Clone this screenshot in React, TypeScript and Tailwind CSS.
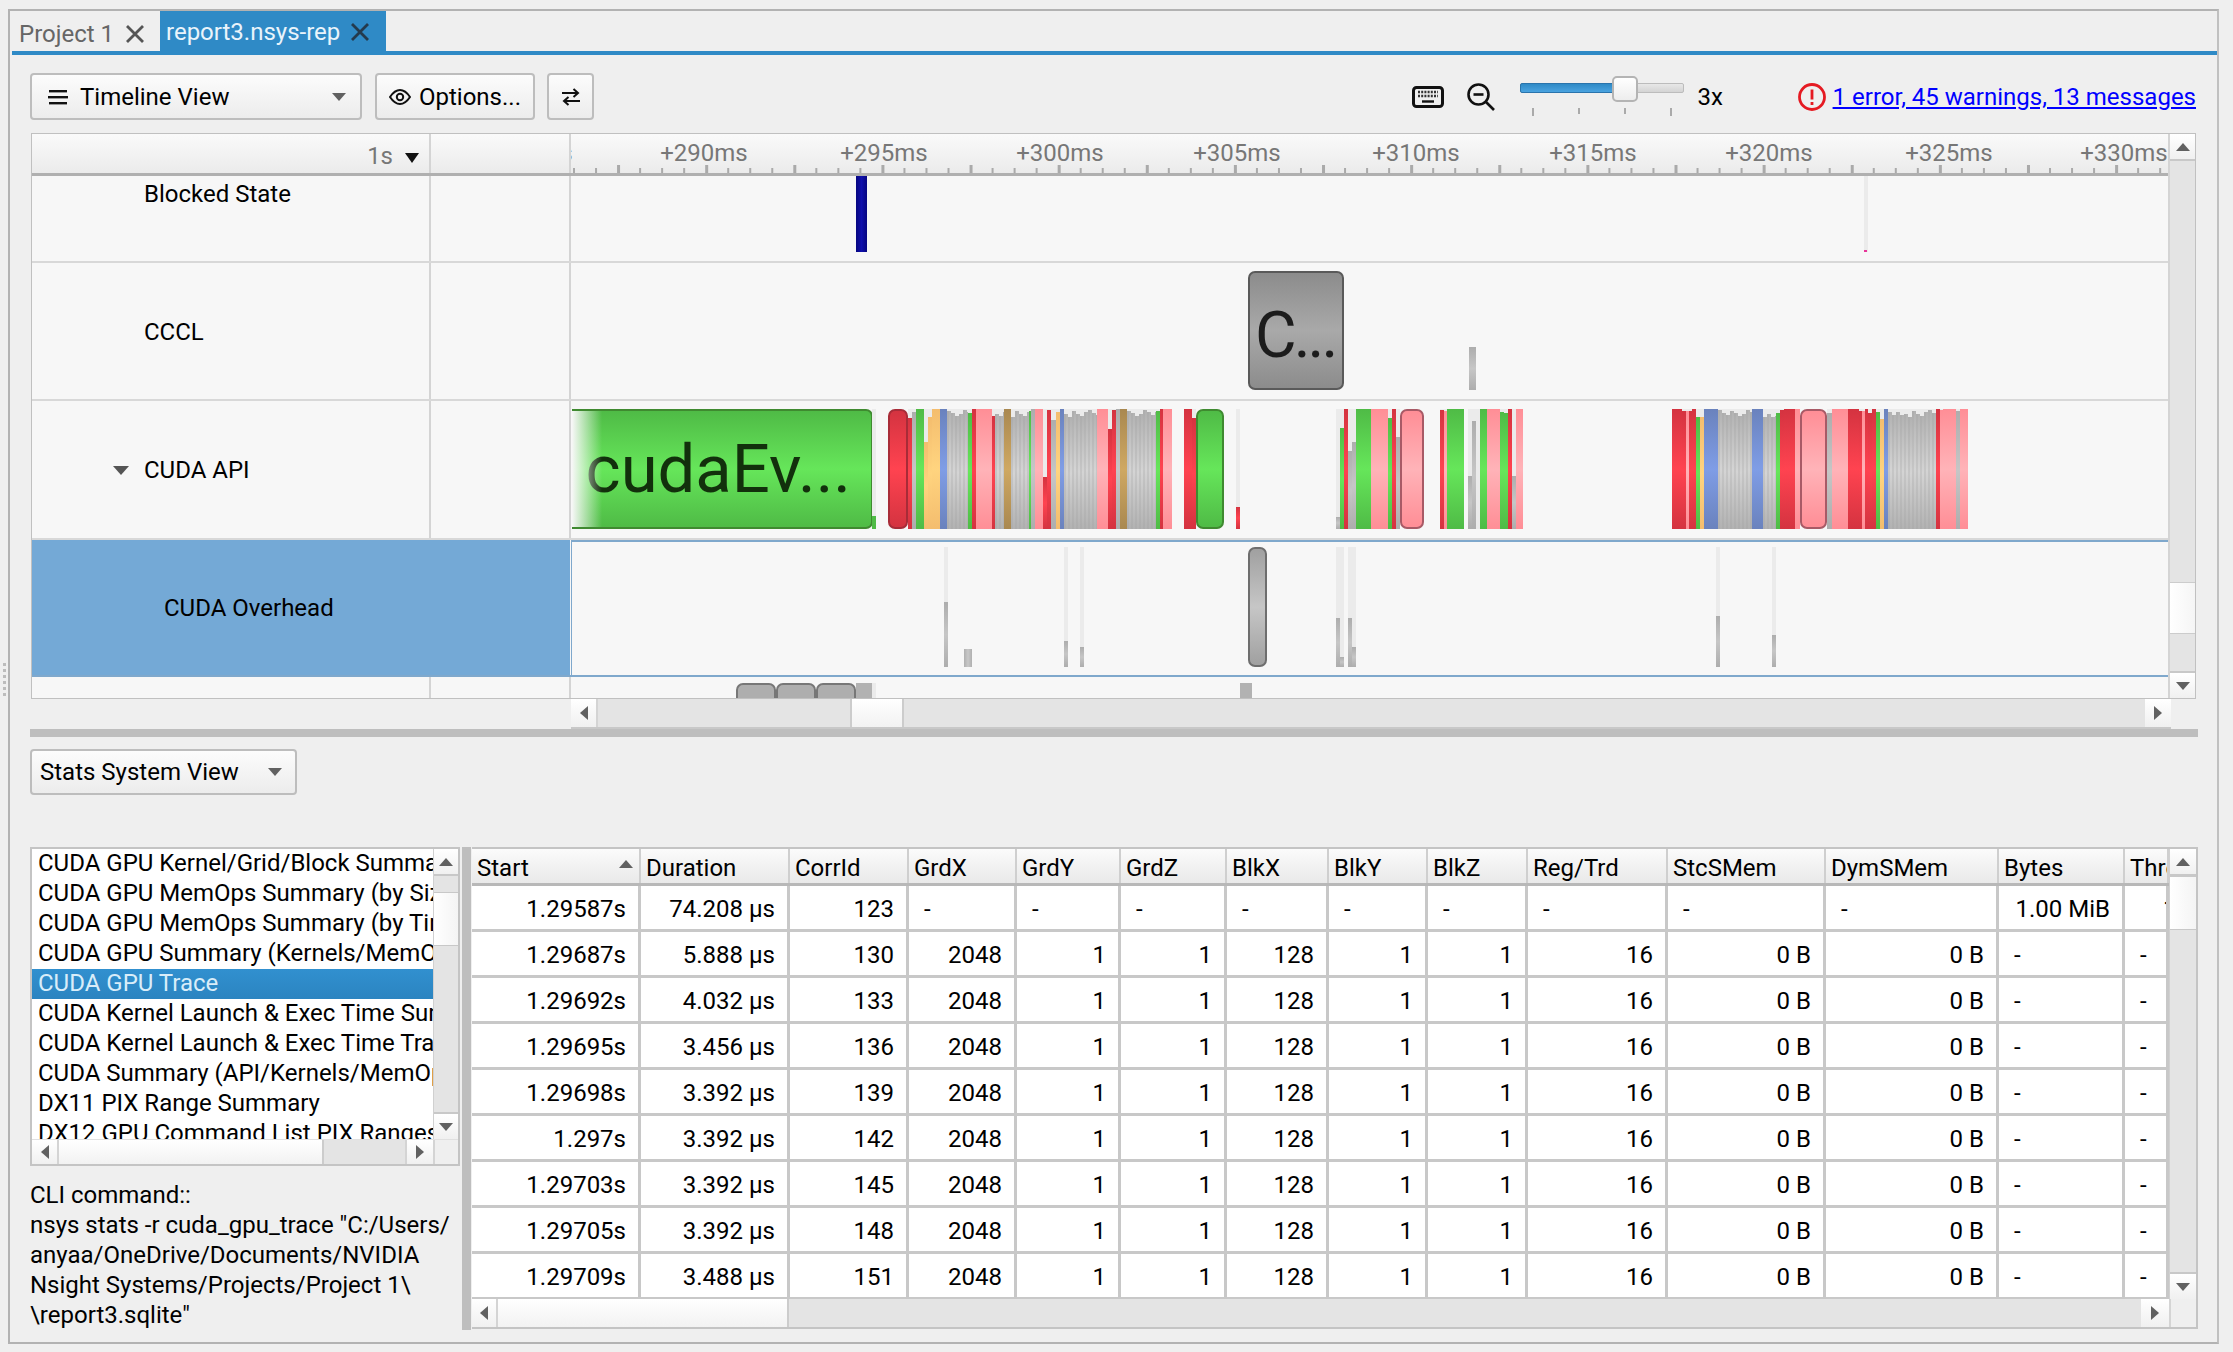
import React from "react";

const CANVAS_X = 571;

type Kind = "green" | "red" | "pink" | "blue" | "orange" | "brown" | "grey" | "grey2" | "light";
type Seg = [number, number, Kind, number?];

const fills: Record<Kind, string> = {
  green: "bg-[linear-gradient(180deg,#4fbb46,#66e65a_50%,#4fbb46)]",
  red: "bg-[linear-gradient(180deg,#d43340,#ff4350_50%,#d43340)]",
  pink: "bg-[linear-gradient(180deg,#ff8e96,#ffb3b8_50%,#ff8e96)]",
  blue: "bg-[linear-gradient(180deg,#6a82bd,#7f9de6_50%,#6a82bd)]",
  orange: "bg-[linear-gradient(180deg,#f4bd6e,#ffd47f_50%,#f4bd6e)]",
  brown: "bg-[linear-gradient(180deg,#a98850,#cfa862_50%,#a98850)]",
  grey: "bg-[linear-gradient(180deg,#adadad,#c6c6c6_50%,#adadad)]",
  grey2: "bg-[linear-gradient(180deg,#b2b2b2,#d4d4d4_50%,#b2b2b2)]",
  light: "bg-[#ebebeb]",
};

// jagged grey runs, one pair of stripes per 4px
const jag = [3, 6, 5, 8, 2, 5, 7, 3, 1, 4, 6, 2, 4, 7, 5, 1, 3, 6];
function greyRun(x0: number, x1: number, base = 0): Seg[] {
  const out: Seg[] = [];
  let i = Math.floor(x0);
  for (let x = x0; x < x1; x += 4) {
    const off = base + jag[i++ % jag.length];
    out.push([x, Math.min(x + 2, x1), "grey", off]);
    if (x + 2 < x1) out.push([x + 2, Math.min(x + 4, x1), "grey2", off]);
  }
  return out;
}

const apiSegs: Seg[] = [
  [872, 876, "light"],
  [908, 912, "red", 9],
  [912, 916, "grey", 3],
  [916, 924, "green"],
  [924, 928, "orange", 33],
  [928, 932, "orange", 8],
  [932, 940, "orange"],
  [940, 947, "blue"],
  ...greyRun(947, 968),
  [968, 972, "green", 4],
  [972, 976, "red"],
  [976, 992, "pink"],
  [992, 995, "red", 7],
  ...greyRun(995, 1004),
  [1004, 1011, "brown"],
  ...greyRun(1011, 1029),
  [1029, 1031, "green", 2],
  [1031, 1035, "grey"],
  [1035, 1043, "pink"],
  [1043, 1047, "red", 68],
  [1047, 1051, "red", 1],
  [1051, 1056, "grey", 11],
  [1056, 1060, "orange", 3],
  [1060, 1064, "blue"],
  ...greyRun(1064, 1097),
  [1097, 1108, "pink"],
  [1108, 1112, "red", 20],
  [1112, 1116, "red", 1],
  [1116, 1120, "grey"],
  [1120, 1127, "brown"],
  ...greyRun(1127, 1156),
  [1156, 1160, "green", 2],
  [1160, 1163, "red"],
  [1163, 1172, "pink"],
  [1184, 1192, "red"],
  [1192, 1196, "red", 9],
  [1236, 1240, "red", 98],
  [1336, 1340, "grey", 108],
  [1340, 1344, "green", 19],
  [1344, 1348, "red"],
  [1348, 1352, "grey", 42],
  [1352, 1356, "grey", 33],
  [1356, 1371, "green"],
  [1371, 1388, "pink"],
  [1388, 1392, "green", 9],
  [1392, 1396, "red"],
  [1396, 1400, "grey", 28],
  [1440, 1444, "red", 1],
  [1444, 1447, "pink", 2],
  [1447, 1464, "green"],
  [1468, 1472, "grey", 67],
  [1472, 1476, "grey", 12],
  [1476, 1480, "light"],
  [1480, 1487, "green"],
  [1487, 1500, "pink"],
  [1500, 1504, "green", 3],
  [1504, 1508, "green", 4],
  [1508, 1512, "red"],
  [1512, 1516, "grey", 67],
  [1516, 1523, "pink"],
  [1672, 1682, "red"],
  [1682, 1686, "red", 2],
  [1686, 1689, "pink", 2],
  [1689, 1692, "red", 2],
  [1692, 1696, "red"],
  [1696, 1700, "green", 8],
  [1700, 1704, "orange", 8],
  [1704, 1718, "blue"],
  ...greyRun(1718, 1752),
  [1752, 1763, "blue"],
  ...greyRun(1763, 1776, 2),
  [1776, 1780, "green", 4],
  [1780, 1784, "red", 1],
  [1784, 1795, "red"],
  [1795, 1800, "pink"],
  [1827, 1832, "grey", 4],
  [1832, 1848, "pink"],
  [1848, 1859, "red"],
  [1859, 1862, "red", 2],
  [1862, 1865, "pink", 2],
  [1865, 1868, "red"],
  [1868, 1872, "red", 4],
  [1872, 1876, "red"],
  [1876, 1880, "green", 3],
  [1880, 1884, "orange", 10],
  [1884, 1888, "blue"],
  ...greyRun(1888, 1936),
  [1936, 1940, "red"],
  [1940, 1943, "pink", 1],
  [1943, 1956, "pink"],
  [1956, 1960, "grey", 2],
  [1960, 1968, "pink"],
];

const overheadSegs: Seg[] = [
  [944, 948, "grey", 55],
  [1064, 1068, "grey", 94],
  [1080, 1084, "grey", 100],
  [1336, 1340, "grey", 71],
  [1340, 1344, "grey", 110],
  [1348, 1352, "grey", 71],
  [1352, 1356, "grey", 100],
  [1716, 1720, "grey", 69],
  [1772, 1776, "grey", 88],
];

const ticks = Array.from({ length: 74 }, (_, i) => i);
const rulerLabels = ["+285ms", "+290ms", "+295ms", "+300ms", "+305ms", "+310ms", "+315ms", "+320ms", "+325ms", "+330ms"];

const listItems = [
  "CUDA GPU Kernel/Grid/Block Summary",
  "CUDA GPU MemOps Summary (by Size)",
  "CUDA GPU MemOps Summary (by Time)",
  "CUDA GPU Summary (Kernels/MemOps)",
  "CUDA GPU Trace",
  "CUDA Kernel Launch & Exec Time Summary",
  "CUDA Kernel Launch & Exec Time Trace",
  "CUDA Summary (API/Kernels/MemOps)",
  "DX11 PIX Range Summary",
  "DX12 GPU Command List PIX Ranges Summary",
];

const columns = [
  ["Start", 169],
  ["Duration", 149],
  ["CorrId", 119],
  ["GrdX", 108],
  ["GrdY", 104],
  ["GrdZ", 106],
  ["BlkX", 102],
  ["BlkY", 99],
  ["BlkZ", 100],
  ["Reg/Trd", 140],
  ["StcSMem", 158],
  ["DymSMem", 173],
  ["Bytes", 126],
  ["Threads", 44],
] as const;

const tail = ["2048", "1", "1", "128", "1", "1", "16", "0 B", "0 B", "-", "-"];
const rows = [
  ["1.29587s", "74.208 µs", "123", "-", "-", "-", "-", "-", "-", "-", "-", "-", "1.00 MiB", "1"],
  ["1.29687s", "5.888 µs", "130", ...tail],
  ["1.29692s", "4.032 µs", "133", ...tail],
  ["1.29695s", "3.456 µs", "136", ...tail],
  ["1.29698s", "3.392 µs", "139", ...tail],
  ["1.297s", "3.392 µs", "142", ...tail],
  ["1.29703s", "3.392 µs", "145", ...tail],
  ["1.29705s", "3.392 µs", "148", ...tail],
  ["1.29709s", "3.488 µs", "151", ...tail],
];

function Tri({ dir, className = "" }: { dir: "up" | "down" | "left" | "right"; className?: string }) {
  const pts = { up: "7,1 14,9 0,9", down: "0,1 14,1 7,9", left: "9,0 9,14 1,7", right: "1,0 1,14 9,7" }[dir];
  const box = dir === "up" || dir === "down" ? "0 0 14 10" : "0 0 10 14";
  const size = dir === "up" || dir === "down" ? "w-[14px] h-[10px]" : "w-[10px] h-[14px]";
  return (
    <svg viewBox={box} className={`${size} ${className}`} fill="#616161">
      <polygon points={pts} />
    </svg>
  );
}

function ScrollBtn({ dir, className = "" }: { dir: "up" | "down" | "left" | "right"; className?: string }) {
  return (
    <div className={`flex items-center justify-center shrink-0 bg-[linear-gradient(180deg,#ffffff,#f0f0f0)] ${className}`}>
      <Tri dir={dir} />
    </div>
  );
}

function VScroll({ w, parts }: { w: string; parts: [number, number] }) {
  // parts: grey above the thumb, thumb
  return (
    <div className={`${w} flex flex-col shrink-0 bg-[#e4e4e4] border-l border-[#d0d0d0]`}>
      <ScrollBtn dir="up" className="h-[27px] border-b-2 border-[#c8c8c8]" />
      <div className="bg-[#e4e4e4]" style={{ height: parts[0] }} />
      <div className="bg-[linear-gradient(90deg,#ffffff,#f4f4f4)] border-y border-[#c8c8c8]" style={{ height: parts[1] }} />
      <div className="flex-1 bg-[#e4e4e4]" />
      <ScrollBtn dir="down" className="h-[27px] border-t-2 border-[#c8c8c8]" />
    </div>
  );
}

function Bar({ seg, top, h }: { seg: Seg; top: number; h: number }) {
  const [x0, x1, kind, off = 0] = seg;
  return (
    <div className="absolute bg-[#ebebeb]" style={{ left: x0 - CANVAS_X, width: x1 - x0, top, height: h }}>
      <div className={`absolute inset-x-0 bottom-0 ${fills[kind]}`} style={{ top: off }} />
    </div>
  );
}

function Box({ x0, x1, top, h, className, children }: { x0: number; x1: number; top: number; h: number; className: string; children?: React.ReactNode }) {
  return (
    <div className={`absolute overflow-hidden ${className}`} style={{ left: x0 - CANVAS_X, width: x1 - x0, top, height: h }}>
      {children}
    </div>
  );
}

function LabelRow({ h, selected, label, canvas }: { h: number; selected?: boolean; label?: React.ReactNode; canvas?: React.ReactNode }) {
  return (
    <div className={`flex shrink-0 border-b-2 ${selected ? "border-[#7fa8cc]" : "border-[#d8d8d8]"}`} style={{ height: h }}>
      <div className={`shrink-0 ${selected ? "w-[399px] bg-[#74a9d6]" : "w-[399px] border-r-2 border-[#d4d4d4]"}`}>{label}</div>
      <div className={`shrink-0 ${selected ? "w-[139px] mr-[1px] bg-[#74a9d6]" : "w-[140px] border-r-2 border-[#d4d4d4]"}`} />
      <div className="relative flex-1 overflow-hidden">
        {selected && <div className="absolute left-0 right-0 top-0 h-[2px] bg-[#7fa8cc]" />}
        {selected && <div className="absolute left-0 top-0 bottom-0 w-[1px] bg-[#7fa8cc]" />}
        {canvas}
      </div>
    </div>
  );
}

function Dropdown({ children, className }: { children: React.ReactNode; className: string }) {
  return (
    <div className={`flex items-center shrink-0 border-2 border-[#bdbdbd] rounded-[4px] bg-[linear-gradient(180deg,#fcfcfc,#ececec)] ${className}`}>
      {children}
    </div>
  );
}

export default function App() {
  return (
    <div className="w-[2233px] h-[1352px] overflow-hidden bg-[#efefef] pl-[8px] pt-[9px] relative font-['Roboto',sans-serif] text-[24px] leading-[30px] text-black">
      <div className="absolute left-[3px] top-[663px] flex flex-col gap-[3px]">
        {[0, 1, 2, 3, 4, 5].map((d) => (
          <div key={d} className="w-[3px] h-[3px] bg-[#bcbcbc]" />
        ))}
      </div>

      <div className="w-[2211px] h-[1335px] border-2 border-b-2 border-[#b2b2b2] border-r-[#c0c0c0]">
        {/* tabs */}
        <div className="flex h-[44px] ml-[2px] border-b-4 border-[#2f8ac6]">
          <div className="w-[148px] flex items-center pl-[7px] pt-[5px] text-[#666] shrink-0">
            Project 1
            <svg viewBox="0 0 18 18" className="w-[18px] h-[18px] ml-[12px]" stroke="#555" strokeWidth="2.8" fill="none">
              <path d="M1 1 L17 17 M17 1 L1 17" />
            </svg>
          </div>
          <div className="w-[226px] flex items-center pl-[6px] pt-[2px] bg-[#2f8ac6] text-[#e9f4fb] shrink-0">
            report3.nsys-rep
            <svg viewBox="0 0 18 18" className="w-[18px] h-[18px] ml-[11px]" stroke="#243a4d" strokeWidth="2.8" fill="none">
              <path d="M1 1 L17 17 M17 1 L1 17" />
            </svg>
          </div>
        </div>

        {/* toolbar */}
        <div className="flex items-center h-[47px] mt-[18px] ml-[20px] w-[2166px]">
          <Dropdown className="w-[332px] h-[47px] pl-[16px] pr-[14px]">
            <svg viewBox="0 0 20 16" className="w-[20px] h-[16px]" fill="#111">
              <rect x="1" y="1" width="18" height="2.4" />
              <rect x="0" y="7" width="20" height="2.4" />
              <rect x="1" y="13" width="18" height="2.4" />
            </svg>
            <span className="ml-[12px] flex-1">Timeline View</span>
            <Tri dir="down" />
          </Dropdown>
          <Dropdown className="w-[160px] h-[47px] ml-[13px] pl-[12px]">
            <svg viewBox="0 0 22 16" className="w-[22px] h-[16px]" fill="none" stroke="#111" strokeWidth="2">
              <path d="M1 8 C5 2 8 1 11 1 C14 1 17 2 21 8 C17 14 14 15 11 15 C8 15 5 14 1 8 Z" />
              <circle cx="11" cy="8" r="3.2" />
            </svg>
            <span className="ml-[8px]">Options...</span>
          </Dropdown>
          <Dropdown className="w-[47px] h-[47px] ml-[12px] justify-center">
            <svg viewBox="0 0 18 18" className="w-[18px] h-[18px]" fill="none" stroke="#111" strokeWidth="2">
              <path d="M0 5 H16 M11.5 1 L16 5 L11.5 9" />
              <path d="M18 13 H2 M6.5 9 L2 13 L6.5 17" />
            </svg>
          </Dropdown>

          <div className="flex-1" />
          <svg viewBox="0 0 32 22" className="w-[32px] h-[22px]" fill="none">
            <rect x="1.5" y="1.5" width="29" height="19" rx="3" stroke="#111" strokeWidth="3" />
            <path d="M6 6 H26 M6 10 H26" stroke="#333" strokeWidth="2.6" strokeDasharray="2 1.2" />
            <path d="M10 15.5 H22" stroke="#111" strokeWidth="2.4" />
          </svg>
          <svg viewBox="0 0 28 28" className="w-[28px] h-[28px] ml-[23px]" fill="none" stroke="#111" strokeWidth="2.6">
            <circle cx="11.5" cy="11.5" r="10" />
            <path d="M6.5 11.5 H16.5" />
            <path d="M18.5 18.5 L27 27" />
          </svg>

          {/* zoom slider */}
          <div className="relative w-[164px] h-[47px] ml-[25px]">
            <div className="absolute left-0 right-0 top-[10px] h-[10px] rounded-[2px] border border-[#bcbcbc] bg-[linear-gradient(180deg,#e8e8e8,#d4d4d4)]" />
            <div className="absolute left-0 w-[94px] top-[10px] h-[10px] rounded-l-[2px] border border-[#2a74ac] bg-[linear-gradient(180deg,#2f8ac6,#4aa3e0)]" />
            <div className="absolute left-[92px] top-[3px] w-[26px] h-[26px] rounded-[5px] border-2 border-[#b4b4b4] bg-[linear-gradient(180deg,#ffffff,#ededed)]" />
            {[12, 58, 104, 150].map((t) => (
              <div key={t} className={`absolute w-[2px] bg-[#aaaaaa] ${t === 12 || t === 150 ? "top-[35px] h-[8px]" : "top-[35px] h-[6px]"}`} style={{ left: t }} />
            ))}
          </div>
          <span className="ml-[14px] w-[100px]">3x</span>

          <svg viewBox="0 0 28 28" className="w-[28px] h-[28px]" fill="none">
            <circle cx="14" cy="14" r="12.5" stroke="#e51a22" strokeWidth="2.8" />
            <path d="M14 6.5 V16.5 M14 19 V22" stroke="#e51a22" strokeWidth="2.8" />
          </svg>
          <span className="ml-[7px] text-[#0000ff] underline whitespace-nowrap">1 error, 45 warnings, 13 messages</span>
        </div>

        {/* timeline */}
        <div className="flex h-[566px] mt-[13px] ml-[21px] w-[2165px] border border-[#c0c0c0]">
          <div className="flex flex-col flex-1 min-w-0 bg-[#f7f7f7] overflow-hidden">
            <div className="flex h-[42px] shrink-0 border-b-[3px] border-[#b0b0b0] bg-[linear-gradient(180deg,#fafafa,#ebebeb)]">
              <div className="w-[399px] shrink-0 border-r-2 border-[#d4d4d4] flex items-center justify-end pr-[10px] pt-[5px] text-[#777]">
                1s
                <svg viewBox="0 0 14 10" className="w-[14px] h-[10px] ml-[12px] mt-[3px]" fill="#111">
                  <polygon points="0,0 14,0 7,10" />
                </svg>
              </div>
              <div className="w-[140px] shrink-0 border-r-2 border-[#d4d4d4]" />
              <div className="relative flex-1 overflow-hidden">
                {rulerLabels.map((l, i) => (
                  <span
                    key={l}
                    className="absolute top-[4px] -translate-x-1/2 text-[#777]"
                    style={{ left: [-42, 133, 313, 489, 666, 845, 1022, 1198, 1378, 1553][i] }}
                  >
                    {l}
                  </span>
                ))}
                <svg className="absolute left-0 bottom-0 w-full h-[8px]">
                  {ticks.map((i) => {
                    const x = 2 + i * 22.03;
                    const major = i % 4 === 2;
                    return <rect key={i} x={x} y={major ? 0 : 3} width={major ? 3 : 2} height={major ? 8 : 5} fill="#aaaaaa" />;
                  })}
                </svg>
              </div>
            </div>

            <LabelRow
              h={87}
              label={<div className="pl-[112px] pt-[3px]">Blocked State</div>}
              canvas={
                <>
                  <Box x0={856} x1={867} top={0} h={76} className="bg-[linear-gradient(90deg,#060680,#1010ac,#060680)]" />
                  <Bar seg={[1864, 1868, "light"]} top={0} h={76} />
                  <div className="absolute left-[1293px] top-[74px] w-[3px] h-[2px] bg-[#e8359a]" />
                </>
              }
            />
            <LabelRow
              h={138}
              label={<div className="pl-[112px] pt-[2px] h-full flex items-center">CCCL</div>}
              canvas={
                <>
                  <Box
                    x0={1248}
                    x1={1344}
                    top={8}
                    h={119}
                    className="rounded-[7px] border-2 border-[#5a5a5a] bg-[linear-gradient(180deg,#8c8c8c,#a9a9a9_50%,#8c8c8c)] flex items-center pl-[5px] pt-[10px] text-[64px] tracking-[-3px] text-[#1c1c1c]"
                  >
                    C...
                  </Box>
                  <Bar seg={[1469, 1476, "grey"]} top={84} h={43} />
                </>
              }
            />
            <LabelRow
              h={139}
              label={
                <div className="pl-[81px] pt-[1px] h-full flex items-center">
                  <svg viewBox="0 0 16 9" className="w-[16px] h-[9px] mr-[15px]" fill="#555">
                    <polygon points="0,0 16,0 8,9" />
                  </svg>
                  CUDA API
                </div>
              }
              canvas={
                <>
                  <Box
                    x0={572}
                    x1={873}
                    top={8}
                    h={120}
                    className="rounded-r-[7px] border-2 border-l-0 border-[#3f8a30] bg-[linear-gradient(180deg,#4fbb46,#66e65a_50%,#4fbb46)] flex items-center justify-end pr-[20px] text-[67px] text-[#12300c] whitespace-nowrap"
                  >
                    cudaEv...
                    <div className="absolute left-0 top-0 bottom-0 w-[30px] bg-[linear-gradient(90deg,#f7f7f7,#f7f7f700)]" />
                  </Box>
                  {apiSegs.map((s, i) => (
                    <Bar key={i} seg={s} top={8} h={120} />
                  ))}
                  <div className="absolute left-[301px] top-[115px] w-[4px] h-[13px] bg-[#4fbb46]" />
                  <Box x0={888} x1={908} top={8} h={120} className="rounded-[7px] border-2 border-[#a82c38] bg-[linear-gradient(180deg,#d43340,#ff4350_50%,#d43340)]" />
                  <Box x0={1196} x1={1224} top={8} h={120} className="rounded-[7px] border-2 border-[#3f8a30] bg-[linear-gradient(180deg,#4fbb46,#66e65a_50%,#4fbb46)]" />
                  <Box x0={1400} x1={1424} top={8} h={120} className="rounded-[7px] border-2 border-[#a85a66] bg-[linear-gradient(180deg,#ff8e96,#ffb3b8_50%,#ff8e96)]" />
                  <Box x0={1800} x1={1827} top={8} h={120} className="rounded-[7px] border-2 border-[#a85a66] bg-[linear-gradient(180deg,#ff8e96,#ffb3b8_50%,#ff8e96)]" />
                </>
              }
            />
            <LabelRow
              h={137}
              selected
              label={<div className="pl-[132px] h-full flex items-center">CUDA Overhead</div>}
              canvas={
                <>
                  {overheadSegs.map((s, i) => (
                    <Bar key={i} seg={s} top={7} h={120} />
                  ))}
                  <Box x0={964} x1={972} top={109} h={18} className="bg-[linear-gradient(90deg,#b0b0b0,#c8c8c8,#b0b0b0)]" />
                  <Box x0={1248} x1={1267} top={7} h={120} className="rounded-[7px] border-2 border-[#6e6e6e] bg-[linear-gradient(180deg,#a0a0a0,#c6c6c6_50%,#a0a0a0)]" />
                </>
              }
            />
            <div className="flex flex-1 min-h-0">
              <div className="w-[399px] shrink-0 border-r-2 border-[#d4d4d4]" />
              <div className="w-[140px] shrink-0 border-r-2 border-[#d4d4d4]" />
              <div className="relative flex-1 overflow-hidden">
                <Box x0={736} x1={776} top={6} h={20} className="rounded-t-[7px] border-2 border-[#777] bg-[#aeaeae]" />
                <Box x0={776} x1={816} top={6} h={20} className="rounded-t-[7px] border-2 border-[#777] bg-[#aeaeae]" />
                <Box x0={816} x1={856} top={6} h={20} className="rounded-t-[7px] border-2 border-[#777] bg-[#aeaeae]" />
                <Box x0={856} x1={872} top={6} h={20} className="bg-[#b2b2b2]" />
                <Box x0={872} x1={876} top={6} h={20} className="bg-[#ebebeb]" />
                <Box x0={1240} x1={1252} top={6} h={20} className="bg-[#b2b2b2]" />
              </div>
            </div>
          </div>
          <div className="w-[27px] shrink-0 flex flex-col bg-[#e4e4e4] border-l-2 border-[#d4d4d4]">
            <ScrollBtn dir="up" className="h-[27px] border-b-2 border-[#c8c8c8]" />
            <div className="h-[421px] bg-[#e4e4e4]" />
            <div className="h-[52px] bg-[linear-gradient(90deg,#ffffff,#f5f5f5)] border-y border-[#cccccc]" />
            <div className="flex-1 bg-[#e4e4e4]" />
            <ScrollBtn dir="down" className="h-[27px] border-t-2 border-[#c8c8c8]" />
          </div>
        </div>

        {/* timeline horizontal scroll */}
        <div className="flex h-[30px] ml-[561px] w-[1600px] border-b-2 border-[#c8c8c8] bg-[#e4e4e4]">
          <ScrollBtn dir="left" className="w-[27px] border-r-2 border-[#d4d4d4]" />
          <div className="w-[252px] bg-[#e4e4e4]" />
          <div className="w-[54px] bg-[linear-gradient(180deg,#ffffff,#f2f2f2)] border-x-2 border-[#cccccc]" />
          <div className="flex-1" />
          <ScrollBtn dir="right" className="w-[26px]" />
        </div>

        {/* splitter */}
        <div className="h-[8px] ml-[20px] w-[2168px] bg-[#bebebe]" />

        {/* stats */}
        <Dropdown className="w-[267px] h-[46px] mt-[12px] ml-[20px] pl-[8px] pr-[13px]">
          <span className="flex-1">Stats System View</span>
          <Tri dir="down" />
        </Dropdown>

        <div className="flex mt-[52px] ml-[20px] h-[483px]">
          <div className="w-[430px] shrink-0 flex flex-col">
            <div className="h-[320px] flex flex-col border-2 border-[#c4c4c4] bg-white">
              <div className="flex h-[290px]">
                <div className="w-[401px] shrink-0 overflow-hidden">
                  {listItems.map((it) => (
                    <div
                      key={it}
                      className={`h-[30px] pl-[6px] whitespace-nowrap leading-[28px] ${it === "CUDA GPU Trace" ? "bg-[linear-gradient(180deg,#3190cf,#2b84c0)] text-[#d9edf9]" : ""}`}
                    >
                      {it}
                    </div>
                  ))}
                </div>
                <VScroll w="w-[25px]" parts={[16, 54]} />
              </div>
              <div className="flex flex-1 bg-[#e4e4e4] border-t border-[#e0e0e0]">
                <ScrollBtn dir="left" className="w-[27px] border-r-2 border-[#d4d4d4]" />
                <div className="w-[263px] bg-[linear-gradient(180deg,#ffffff,#f2f2f2)]" />
                <div className="w-[83px] border-l-2 border-[#cccccc] bg-[#e4e4e4]" />
                <ScrollBtn dir="right" className="w-[28px] border-l-2 border-[#d4d4d4]" />
                <div className="flex-1 bg-[#efefef] border-l-2 border-[#d4d4d4]" />
              </div>
            </div>
            <div className="mt-[14px] whitespace-nowrap">
              <div>CLI command::</div>
              <div>nsys stats -r cuda_gpu_trace "C:/Users/</div>
              <div>anyaa/OneDrive/Documents/NVIDIA</div>
              <div>Nsight Systems/Projects/Project 1\</div>
              <div>\report3.sqlite"</div>
            </div>
          </div>

          <div className="w-[9px] ml-[2px] shrink-0 bg-[#bebebe]" />

          <div className="w-[1726px] h-[482px] ml-[1px] flex flex-col border-t-2 border-r-2 border-b-2 border-[#c4c4c4] bg-white">
            <div className="flex flex-1 min-h-0">
              <div className="w-[1697px] shrink-0 overflow-hidden">
                <div className="flex h-[37px] border-b-[3px] border-[#b8b8b8] bg-[linear-gradient(180deg,#fbfbfb,#e9e9e9)]">
                  {columns.map(([name, w]) => (
                    <div
                      key={name}
                      className="relative shrink-0 overflow-hidden whitespace-nowrap border-r-2 border-[#cfcfcf] pl-[5px] flex items-center pt-[3px]"
                      style={{ width: w }}
                    >
                      {name}
                      {name === "Start" && <Tri dir="up" className="absolute right-[6px] top-[10px]" />}
                    </div>
                  ))}
                </div>
                {rows.map((r) => (
                  <div key={r[2]} className="flex h-[46px] border-b-[3px] border-[#c8c8c8]">
                    {r.map((v, i) => {
                      const isDash = v === "-";
                      // the last column is cut by the scroll bar, only a sliver of the "1" shows
                      const isSliver = i === 13 && v === "1";
                      return (
                        <div
                          key={i}
                          className={`shrink-0 overflow-hidden whitespace-nowrap border-r-[3px] border-[#c8c8c8] flex items-center pt-[3px] ${
                            isSliver ? "justify-start pl-[38px]" : isDash ? "justify-start pl-[15px]" : "justify-end pr-[12px]"
                          }`}
                          style={{ width: columns[i][1] }}
                        >
                          {v}
                        </div>
                      );
                    })}
                  </div>
                ))}
              </div>
              <VScroll w="w-[27px]" parts={[0, 54]} />
            </div>
            <div className="flex h-[28px] shrink-0 bg-[#e4e4e4]">
              <ScrollBtn dir="left" className="w-[26px] border-r-2 border-[#d4d4d4]" />
              <div className="w-[291px] bg-[linear-gradient(180deg,#ffffff,#f2f2f2)] border-r-2 border-[#cccccc]" />
              <div className="flex-1" />
              <ScrollBtn dir="right" className="w-[28px]" />
              <div className="w-[27px] bg-[#efefef] border-l-2 border-[#d4d4d4]" />
            </div>
          </div>
        </div>
      </div>
    </div>
  );
}
